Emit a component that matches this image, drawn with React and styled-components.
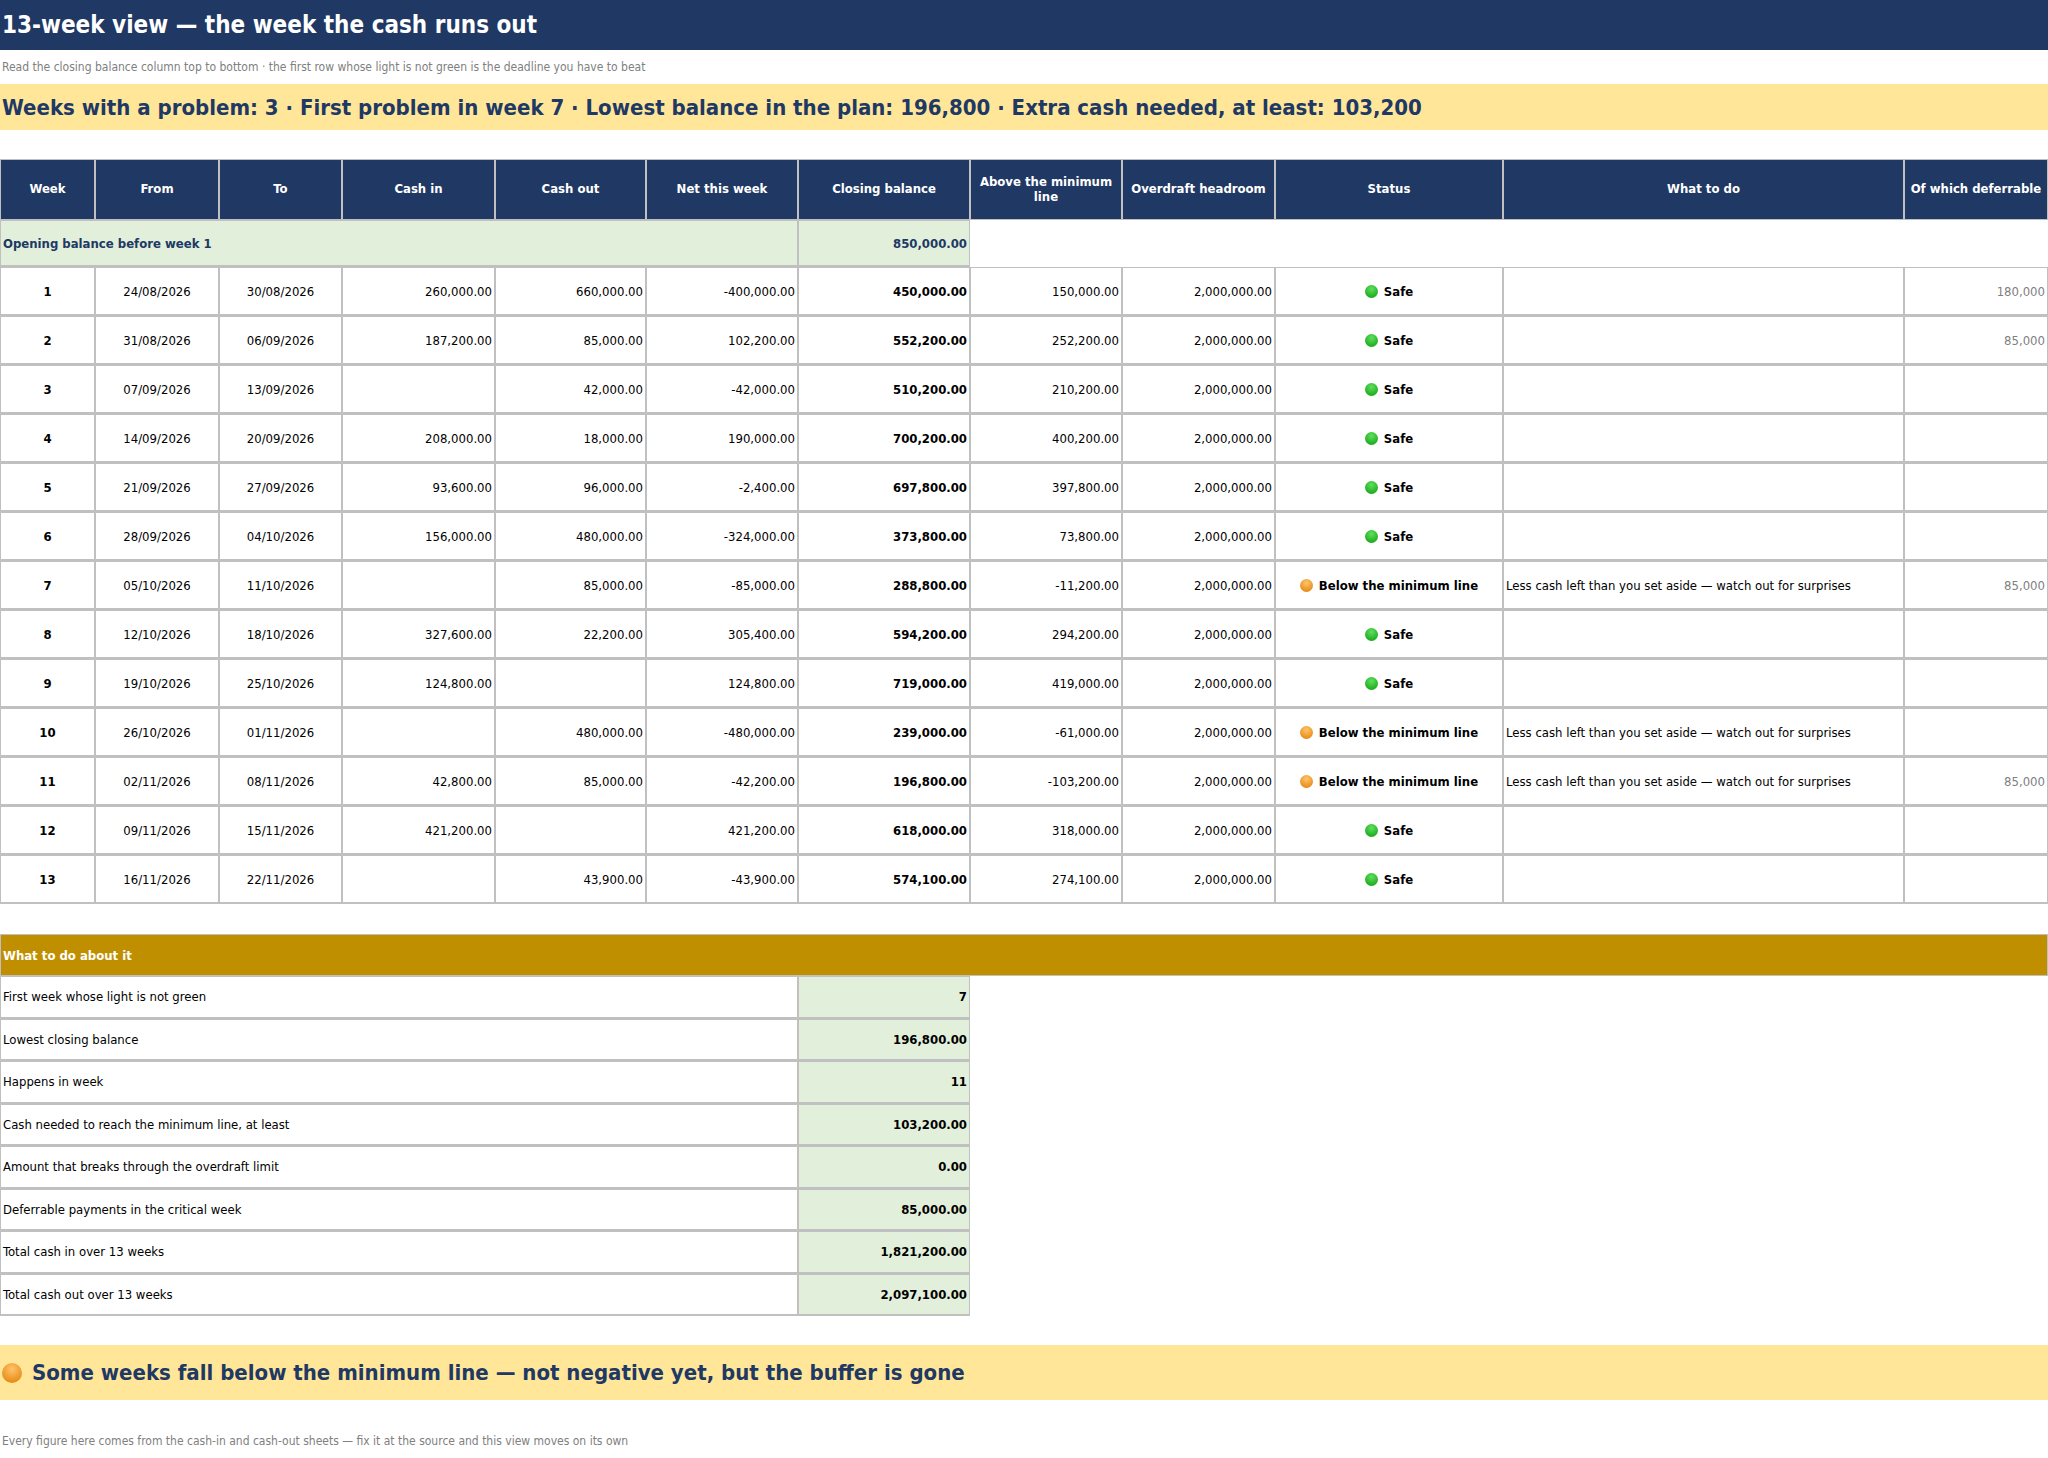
import styled, { createGlobalStyle } from "styled-components";

const Global = createGlobalStyle`
  body { margin: 0; background: #fff; font-family: "DejaVu Sans Condensed", "DejaVu Sans", sans-serif; font-stretch: condensed; }
`;

const cols = [95, 124, 123, 153, 151, 152, 172, 152, 153, 228, 401, 144];
const heads = ["Week", "From", "To", "Cash in", "Cash out", "Net this week", "Closing balance", "Above the minimum line", "Overdraft headroom", "Status", "What to do", "Of which deferrable"];
const warn = "Less cash left than you set aside — watch out for surprises";
const rows = [
  [1, "24/08/2026", "30/08/2026", "260,000.00", "660,000.00", "-400,000.00", "450,000.00", "150,000.00", 1, "", "180,000"],
  [2, "31/08/2026", "06/09/2026", "187,200.00", "85,000.00", "102,200.00", "552,200.00", "252,200.00", 1, "", "85,000"],
  [3, "07/09/2026", "13/09/2026", "", "42,000.00", "-42,000.00", "510,200.00", "210,200.00", 1, "", ""],
  [4, "14/09/2026", "20/09/2026", "208,000.00", "18,000.00", "190,000.00", "700,200.00", "400,200.00", 1, "", ""],
  [5, "21/09/2026", "27/09/2026", "93,600.00", "96,000.00", "-2,400.00", "697,800.00", "397,800.00", 1, "", ""],
  [6, "28/09/2026", "04/10/2026", "156,000.00", "480,000.00", "-324,000.00", "373,800.00", "73,800.00", 1, "", ""],
  [7, "05/10/2026", "11/10/2026", "", "85,000.00", "-85,000.00", "288,800.00", "-11,200.00", 0, warn, "85,000"],
  [8, "12/10/2026", "18/10/2026", "327,600.00", "22,200.00", "305,400.00", "594,200.00", "294,200.00", 1, "", ""],
  [9, "19/10/2026", "25/10/2026", "124,800.00", "", "124,800.00", "719,000.00", "419,000.00", 1, "", ""],
  [10, "26/10/2026", "01/11/2026", "", "480,000.00", "-480,000.00", "239,000.00", "-61,000.00", 0, warn, ""],
  [11, "02/11/2026", "08/11/2026", "42,800.00", "85,000.00", "-42,200.00", "196,800.00", "-103,200.00", 0, warn, "85,000"],
  [12, "09/11/2026", "15/11/2026", "421,200.00", "", "421,200.00", "618,000.00", "318,000.00", 1, "", ""],
  [13, "16/11/2026", "22/11/2026", "", "43,900.00", "-43,900.00", "574,100.00", "274,100.00", 1, "", ""],
];
const summary = [
  ["First week whose light is not green", "7"],
  ["Lowest closing balance", "196,800.00"],
  ["Happens in week", "11"],
  ["Cash needed to reach the minimum line, at least", "103,200.00"],
  ["Amount that breaks through the overdraft limit", "0.00"],
  ["Deferrable payments in the critical week", "85,000.00"],
  ["Total cash in over 13 weeks", "1,821,200.00"],
  ["Total cash out over 13 weeks", "2,097,100.00"],
];

const TitleBar = styled.div`
  background: #203864; color: #fff; height: 50px; display: flex; align-items: center;
  font-size: 24px; font-weight: bold; padding-left: 2px;
`;
const Note = styled.div`
  color: #808080; font-size: 12px; padding: ${(p) => p.$pad || "10px 2px"};
`;
const Banner = styled.div`
  background: #ffe699; color: #203864; font-weight: bold; font-size: ${(p) => p.$size}px;
  height: ${(p) => p.$h}px; display: flex; align-items: center; gap: 10px; padding-left: 2px;
`;
const Grid = styled.div`
  display: grid; grid-template-columns: ${cols.map((c) => c + "px").join(" ")};
  margin-top: 29px; font-size: 13px;
`;
const Head = styled.div`
  background: #203864; color: #fff; font-weight: bold; height: 61px; display: flex;
  align-items: center; justify-content: center; text-align: center; line-height: 1.1;
  border: 1px solid #c0c0c0; box-sizing: border-box; padding: 0 4px;
`;
const Cell = styled.div`
  height: 49px; box-sizing: border-box; border: 1px solid #c0c0c0; border-width: 1px 1px 2px 1px;
  display: flex; align-items: center; padding: 0 2px; background: #fff;
  justify-content: ${(p) => p.$align || "flex-end"};
  font-weight: ${(p) => (p.$bold ? "bold" : "normal")};
  color: ${(p) => p.$color || "#000"};
  font-size: ${(p) => (p.$small ? 12 : 13)}px;
`;
const Opening = styled(Cell)`
  background: #e2efda; color: #203864; font-weight: bold; height: 47px;
  grid-column: ${(p) => p.$span};
`;
const Dot = styled.span`
  width: 13px; height: 13px; border-radius: 50%; display: inline-block; margin-right: 6px;
  background: ${(p) => (p.$ok ? "radial-gradient(circle at 50% 30%, #5fe05f, #0a9a0a)" : "radial-gradient(circle at 50% 30%, #ffc46b, #e07b00)")};
`;
const Gold = styled.div`
  margin-top: 30px; background: #bf8f00; color: #fff; font-weight: bold; font-size: 13px;
  height: 42px; display: flex; align-items: center; padding-left: 2px; border: 1px solid #c0c0c0; box-sizing: border-box;
`;
const Sum = styled.div`
  display: grid; grid-template-columns: 798px 172px; font-size: 13px;
`;
const SumCell = styled.div`
  height: 42.5px; box-sizing: border-box; border: 1px solid #c0c0c0; border-width: 1px 1px 2px 1px;
  display: flex; align-items: center; padding: 0 2px;
  background: ${(p) => (p.$val ? "#e2efda" : "#fff")};
  justify-content: ${(p) => (p.$val ? "flex-end" : "flex-start")};
  font-weight: ${(p) => (p.$val ? "bold" : "normal")};
`;
const BigDot = styled(Dot)`
  width: 20px; height: 20px; margin: 0;
`;

export default function App() {
  return (
    <>
      <Global />
      <TitleBar>13-week view — the week the cash runs out</TitleBar>
      <Note>Read the closing balance column top to bottom · the first row whose light is not green is the deadline you have to beat</Note>
      <Banner $size={22} $h={46}>
        Weeks with a problem: 3 · First problem in week 7 · Lowest balance in the plan: 196,800 · Extra cash needed, at least: 103,200
      </Banner>
      <Grid>
        {heads.map((h) => <Head key={h}>{h}</Head>)}
        <Opening $span="span 6" $align="flex-start">Opening balance before week 1</Opening>
        <Opening $span="span 1">850,000.00</Opening>
        <div style={{ gridColumn: "span 5" }} />
        {rows.map((r) => (
          <>
            <Cell key={r[0]} $align="center" $bold>{r[0]}</Cell>
            <Cell $align="center">{r[1]}</Cell>
            <Cell $align="center">{r[2]}</Cell>
            <Cell>{r[3]}</Cell>
            <Cell>{r[4]}</Cell>
            <Cell>{r[5]}</Cell>
            <Cell $bold>{r[6]}</Cell>
            <Cell>{r[7]}</Cell>
            <Cell>2,000,000.00</Cell>
            <Cell $align="center" $bold><Dot $ok={r[8]} />{r[8] ? "Safe" : "Below the minimum line"}</Cell>
            <Cell $align="flex-start">{r[9]}</Cell>
            <Cell $color="#808080">{r[10]}</Cell>
          </>
        ))}
      </Grid>
      <Gold>What to do about it</Gold>
      <Sum>
        {summary.map(([l, v]) => (
          <>
            <SumCell key={l}>{l}</SumCell>
            <SumCell $val>{v}</SumCell>
          </>
        ))}
      </Sum>
      <div style={{ height: 29 }} />
      <Banner $size={22} $h={55}>
        <BigDot />Some weeks fall below the minimum line — not negative yet, but the buffer is gone
      </Banner>
      <Note $pad="34px 2px 0">Every figure here comes from the cash-in and cash-out sheets — fix it at the source and this view moves on its own</Note>
    </>
  );
}
